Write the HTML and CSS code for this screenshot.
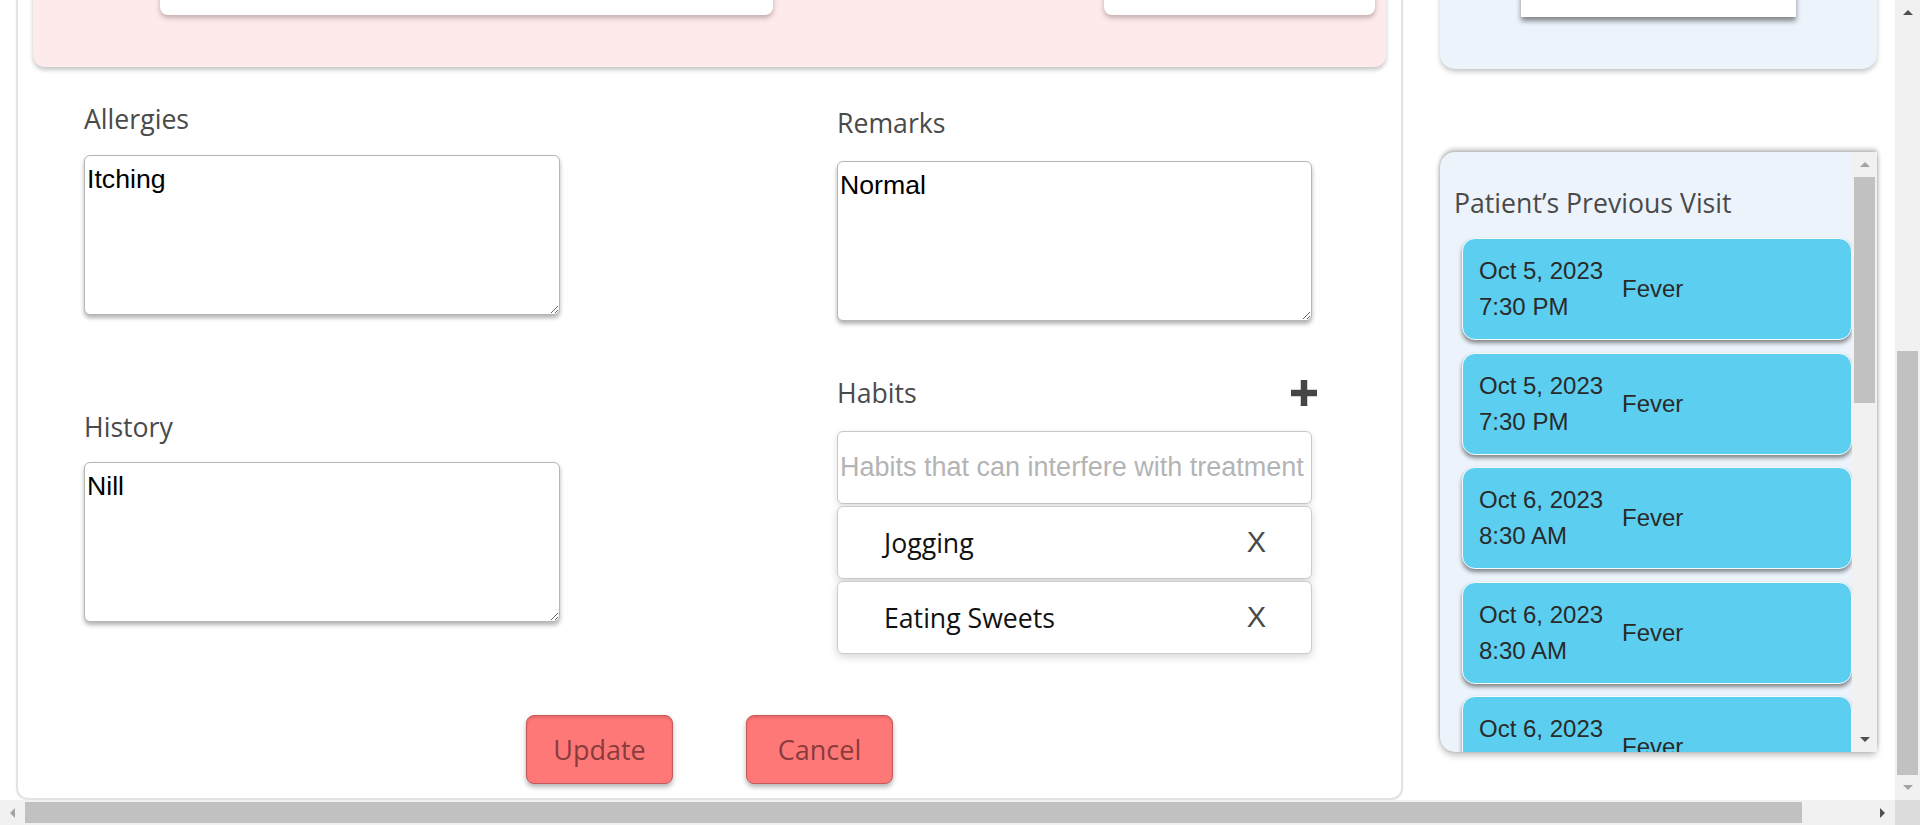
FILE: index.html
```html
<!DOCTYPE html>
<html lang="en">
<head>
<meta charset="utf-8">
<title>Patient Record</title>
<link rel="stylesheet" href="styles.css">
</head>
<body>
<div class="screen">
  <div class="viewport">
    <div class="page">
      <section class="main-card">
        <div class="vitals">
          <div class="vital-box vital-wide"></div>
          <div class="vital-box vital-narrow"></div>
        </div>
        <div class="form-grid">
          <div class="col col-left">
            <div class="field-label label-allergies">Allergies</div>
            <textarea class="note note-allergies">Itching</textarea>
            <div class="field-label label-history">History</div>
            <textarea class="note note-history">Nill</textarea>
          </div>
          <div class="col col-right">
            <div class="field-label label-remarks">Remarks</div>
            <textarea class="note note-remarks">Normal</textarea>
            <div class="habits-head">
              <div class="field-label">Habits</div>
              <svg class="plus" viewBox="0 0 26 26" width="26" height="26" aria-hidden="true"><rect x="0" y="9.75" width="26" height="6.5" fill="#454545"/><rect x="9.75" y="0" width="6.5" height="26" fill="#454545"/></svg>
            </div>
            <input class="habit-input" type="text" placeholder="Habits that can interfere with treatment">
            <div class="habit-item"><span class="habit-name">Jogging</span><span class="habit-remove">X</span></div>
            <div class="habit-item"><span class="habit-name">Eating Sweets</span><span class="habit-remove">X</span></div>
          </div>
        </div>
        <div class="actions">
          <button class="btn" type="button">Update</button>
          <button class="btn" type="button">Cancel</button>
        </div>
      </section>
      <aside class="side">
        <div class="info-panel"><div class="info-box"></div></div>
        <div class="visits">
          <div class="visits-content">
            <h2 class="visits-title">Patient’s Previous Visit</h2>
            <div class="visit-card"><div class="visit-when"><div>Oct 5, 2023</div><div>7:30 PM</div></div><div class="visit-reason">Fever</div></div>
            <div class="visit-card"><div class="visit-when"><div>Oct 5, 2023</div><div>7:30 PM</div></div><div class="visit-reason">Fever</div></div>
            <div class="visit-card"><div class="visit-when"><div>Oct 6, 2023</div><div>8:30 AM</div></div><div class="visit-reason">Fever</div></div>
            <div class="visit-card"><div class="visit-when"><div>Oct 6, 2023</div><div>8:30 AM</div></div><div class="visit-reason">Fever</div></div>
            <div class="visit-card"><div class="visit-when"><div>Oct 6, 2023</div><div>8:30 AM</div></div><div class="visit-reason">Fever</div></div>
          </div>
          <div class="sb-v sb-inner">
            <div class="sb-btn"><span class="tri tri-up tri-off"></span></div>
            <div class="sb-track-v"><div class="thumb-v thumb-inner"></div></div>
            <div class="sb-btn"><span class="tri tri-down"></span></div>
          </div>
        </div>
      </aside>
    </div>
  </div>
  <div class="sb-v sb-page">
    <div class="sb-btn"><span class="tri tri-up"></span></div>
    <div class="sb-track-v"><div class="thumb-v thumb-page"></div></div>
    <div class="sb-btn"><span class="tri tri-down tri-off"></span></div>
  </div>
  <div class="sb-h">
    <div class="sb-btn"><span class="tri tri-left tri-off"></span></div>
    <div class="sb-track-h"><div class="thumb-h"></div></div>
    <div class="sb-btn"><span class="tri tri-right"></span></div>
  </div>
  <div class="sb-corner"></div>
</div>
</body>
</html>
```

FILE: styles.css
```css
* { box-sizing: border-box; }

html, body {
  margin: 0;
  padding: 0;
  background: #ffffff;
}

body {
  width: 1920px;
  height: 825px;
  overflow: hidden;
  font-family: "Open Sans", "Noto Sans", sans-serif;
}

.screen {
  display: grid;
  grid-template-columns: 1895px 25px;
  grid-template-rows: 800px 25px;
  width: 1920px;
  height: 825px;
}

.viewport {
  overflow: hidden;
  background: #ffffff;
}

.page {
  display: flex;
  align-items: flex-start;
  gap: 37px;
  margin-top: -53px;
  padding-left: 16px;
}

/* ---------- main card ---------- */
.main-card {
  width: 1387px;
  flex: none;
  border: 2px solid #e3e3e3;
  border-radius: 12px;
  padding: 18px 15px 14px 15px;
  background: #ffffff;
  box-shadow: 0 0 2px rgba(0, 0, 0, 0.08);
}

.vitals {
  height: 100px;
  background: #fdeaea;
  border-radius: 12px;
  box-shadow: 0 3px 4px rgba(0, 0, 0, 0.22);
  display: flex;
  align-items: flex-end;
  padding-bottom: 52px;
}

.vital-box {
  height: 40px;
  background: #ffffff;
  border-radius: 8px;
  box-shadow: 0 3px 5px rgba(90, 60, 60, 0.35);
}

.vital-wide {
  width: 613px;
  margin-left: 127px;
}

.vital-narrow {
  width: 271px;
  margin-left: auto;
  margin-right: 11px;
}

.form-grid {
  display: grid;
  grid-template-columns: 476px 475px;
  column-gap: 277px;
  padding-left: 51px;
}

.col {
  display: flex;
  flex-direction: column;
  align-items: flex-start;
}

.field-label {
  font-family: "Open Sans", "Noto Sans", sans-serif;
  font-size: 26.67px;
  line-height: 36px;
  color: #4a4a4a;
}

.label-allergies { margin-top: 34px; }
.label-history { margin-top: 94px; }
.label-remarks { margin-top: 38px; }

.note {
  display: block;
  width: 476px;
  height: 160px;
  margin: 18px 0 0 0;
  padding: 8px 2px 6px 2px;
  border: 1px solid #b6b6b6;
  border-radius: 6px;
  font-family: "Liberation Sans", Arial, sans-serif;
  font-size: 26.67px;
  color: #000000;
  background: #ffffff;
  box-shadow: 0 3px 4px rgba(0, 0, 0, 0.3);
  outline: none;
  resize: both;
}

.note-history { margin-top: 17px; }
.note-remarks { width: 475px; margin-top: 20px; }

.habits-head {
  margin-top: 54px;
  width: 480px;
  display: flex;
  align-items: center;
  justify-content: space-between;
}

.plus { display: block; flex: none; }

.habit-input {
  display: block;
  margin-top: 19.5px;
  width: 475px;
  height: 73px;
  padding: 0 2px;
  border: 1px solid #c8c8c8;
  border-radius: 6px;
  font-family: "Liberation Sans", Arial, sans-serif;
  font-size: 27px;
  color: #222222;
  background: #ffffff;
  box-shadow: 0 2px 6px rgba(0, 0, 0, 0.12);
  outline: none;
}

.habit-input::placeholder { color: #b4b4b4; }

.habit-item {
  margin-top: 2px;
  width: 475px;
  height: 73px;
  display: flex;
  align-items: center;
  justify-content: space-between;
  padding: 0 45px 0 46px;
  border: 1px solid #cccccc;
  border-radius: 6px;
  background: #ffffff;
  box-shadow: 0 3px 8px rgba(0, 0, 0, 0.16);
}

.habit-name {
  font-family: "Open Sans", "Noto Sans", sans-serif;
  font-size: 26.67px;
  color: #111111;
}

.habit-remove {
  font-family: "Liberation Sans", Arial, sans-serif;
  font-size: 29px;
  color: #4a4a4a;
}

.actions {
  display: flex;
  justify-content: center;
  gap: 73px;
  margin-top: 61px;
}

.btn {
  width: 147px;
  height: 69px;
  padding: 0;
  background: #ff7878;
  border: 1px solid #c65a5a;
  border-radius: 8px;
  font-family: "Open Sans", "Noto Sans", sans-serif;
  font-size: 27px;
  color: #8a3b3b;
  box-shadow: 0 3px 5px rgba(0, 0, 0, 0.3), inset 0 2px 2px rgba(150, 40, 40, 0.2);
  cursor: pointer;
}

/* ---------- right column ---------- */
.side {
  width: 437px;
  flex: none;
  display: flex;
  flex-direction: column;
}

.info-panel {
  height: 122px;
  background: #ecf3fb;
  border-radius: 15px;
  box-shadow: 0 3px 5px rgba(0, 0, 0, 0.22);
  display: flex;
  align-items: flex-end;
  padding: 0 0 52.5px 81px;
}

.info-box {
  width: 275px;
  height: 60px;
  background: #ffffff;
  box-shadow: 0 4px 5px rgba(0, 0, 0, 0.45);
}

.visits {
  margin-top: 83px;
  height: 600px;
  display: flex;
  background: #ecf3fb;
  border-radius: 15px 0 6px 15px;
  box-shadow: 0 -3px 4px rgba(0, 0, 0, 0.22), 0 4px 6px rgba(0, 0, 0, 0.22), 0 0 3px rgba(0, 0, 0, 0.12);
}

.visits-content {
  flex: 1;
  overflow: hidden;
  padding: 32.5px 0 0 14px;
  border-radius: 15px 0 0 15px;
}

.visits-title {
  margin: 0 0 17.5px 0;
  font-family: "Open Sans", "Noto Sans", sans-serif;
  font-weight: 400;
  font-size: 26.67px;
  line-height: 36px;
  color: #4a4a4a;
}

.visit-card {
  margin: 0 0 12.5px 8px;
  height: 102px;
  display: flex;
  align-items: center;
  padding: 0 16px;
  background: #5ccff0;
  border: 1px solid #f4fbfe;
  border-radius: 13px;
  box-shadow: 0 3px 4px rgba(0, 0, 0, 0.45);
  font-family: "Liberation Sans", Arial, sans-serif;
  font-size: 24px;
  line-height: 36px;
  color: #2a2a2a;
}

.visit-when { width: 143px; flex: none; }

/* ---------- scrollbars ---------- */
.sb-v {
  display: flex;
  flex-direction: column;
  background: #f1f1f1;
}

.sb-page { width: 25px; height: 800px; }

.sb-inner { width: 25px; flex: none; }

.sb-btn {
  flex: none;
  width: 25px;
  height: 25px;
  display: flex;
  align-items: center;
  justify-content: center;
}

.sb-track-v {
  flex: 1;
  display: flex;
  flex-direction: column;
  padding: 0 2px;
}

.thumb-v { background: #c1c1c1; }
.thumb-inner { height: 226px; }
.thumb-page { margin-top: 326px; height: 424px; }

.sb-h {
  display: flex;
  background: #f1f1f1;
  height: 25px;
}

.sb-track-h {
  flex: 1;
  display: flex;
  align-items: stretch;
  padding: 2px 0;
}

.thumb-h { width: 1777px; background: #c1c1c1; }

.sb-corner { background: #dcdcdc; }

.tri { display: block; width: 0; height: 0; }
.tri-up { border-left: 5px solid transparent; border-right: 5px solid transparent; border-bottom: 5px solid #505050; }
.tri-down { border-left: 5px solid transparent; border-right: 5px solid transparent; border-top: 5px solid #505050; }
.tri-left { border-top: 5px solid transparent; border-bottom: 5px solid transparent; border-right: 5px solid #505050; }
.tri-right { border-top: 5px solid transparent; border-bottom: 5px solid transparent; border-left: 5px solid #505050; }
.tri-up.tri-off { border-bottom-color: #a3a3a3; }
.tri-down.tri-off { border-top-color: #a3a3a3; }
.tri-left.tri-off { border-right-color: #a3a3a3; }
```
